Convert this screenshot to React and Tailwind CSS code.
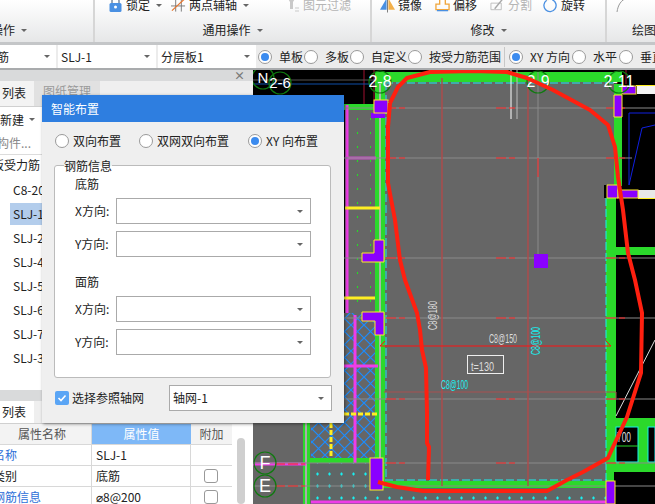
import React from "react";

const Caret = ({ className = "" }) => (
  <span
    className={`inline-block w-0 h-0 border-x-[3px] border-x-transparent border-t-[3px] border-t-[#666] ${className}`}
  />
);

const Radio = ({ checked }) => (
  <span className="shrink-0 w-[14px] h-[14px] rounded-full bg-white border border-[#9a9a9a] flex items-center justify-center">
    {checked && <span className="w-[8px] h-[8px] rounded-full bg-[#3b8bef]" />}
  </span>
);

const RadioItem = ({ label, checked, className = "" }) => (
  <div className={`flex items-center gap-[7px] shrink-0 whitespace-nowrap ${className}`}>
    <Radio checked={checked} />
    <span className="leading-[16px]">{label}</span>
  </div>
);

const RibbonItem = ({ icon, label, arrow, disabled, className = "" }) => (
  <div className={`flex items-center shrink-0 whitespace-nowrap ${disabled ? "text-[#b5b5b5]" : ""} ${className}`}>
    <span className="w-[15px] h-[16px] flex items-center justify-center">{icon}</span>
    <span className="ml-[3px] leading-[14px]">{label}</span>
    {arrow && <Caret className="ml-[6px]" />}
  </div>
);

const LockIcon = () => (
  <svg width="13" height="16" viewBox="0 0 13 16">
    <path d="M3 7V4a3.5 3.5 0 0 1 7 0v3" fill="none" stroke="#7a8aa0" strokeWidth="1.5" />
    <rect x="0.5" y="6" width="12" height="9" rx="1.5" fill="#4a90e2" />
    <circle cx="6.5" cy="10" r="1.5" fill="#fff" />
  </svg>
);

const AxisIcon = () => (
  <svg width="16" height="16" viewBox="0 0 16 16" fill="none">
    <path d="M5 0v15M11 0v15M0 9h15" stroke="#777" strokeWidth="1" />
    <path d="M1 14L14 2" stroke="#e8762c" strokeWidth="1.3" />
  </svg>
);

const FilterIcon = () => (
  <svg width="14" height="16" viewBox="0 0 14 16">
    <path d="M1 0h9L7 5v7H4V5z" fill="#c9c9c9" />
    <path d="M9 11h4M9 14h4" stroke="#c9c9c9" />
  </svg>
);

const MirrorIcon = () => (
  <svg width="16" height="16" viewBox="0 0 16 16">
    <path d="M7 1L0 13h7z" fill="#4a90e2" />
    <path d="M9 1l7 12H9z" fill="#f3b04a" />
    <path d="M8 0v16" stroke="#777" />
  </svg>
);

const OffsetIcon = () => (
  <svg width="16" height="16" viewBox="0 0 16 16" fill="none">
    <path d="M5 0v7H1v6h14V7h-4V0" stroke="#f0a53a" strokeWidth="1.4" />
    <path d="M2 14h12" stroke="#4a90e2" strokeWidth="1.4" />
  </svg>
);

const SplitIcon = () => (
  <svg width="16" height="16" viewBox="0 0 16 16" fill="none">
    <path d="M1 6h11v7H1z" stroke="#bdbdbd" />
    <path d="M5 12L14 1" stroke="#a8a8a8" strokeWidth="1.5" />
  </svg>
);

const RotateIcon = () => (
  <svg width="16" height="16" viewBox="0 0 16 16" fill="none">
    <path d="M10 2.500A6.500 6.500 0 1 1 4 3" stroke="#4a90e2" strokeWidth="1.4" />
    <path d="M3 2h3" stroke="#f0a53a" strokeWidth="1.6" />
  </svg>
);

const Ribbon = () => (
  <div className="h-[42px] flex overflow-hidden bg-gradient-to-b from-white to-[#e6e7e8] text-[#222]">
    <div className="w-[95px] shrink-0 flex flex-col border-r-2 border-r-[#d6d6d6]">
      <div className="h-[10px]" />
      <div className="mt-[14px] h-[12px] flex items-center">
        <span className="-ml-[9px] leading-[14px]">操作</span>
        <Caret className="ml-[6px]" />
      </div>
    </div>
    <div className="w-[277px] shrink-0 flex flex-col border-r-2 border-r-[#d6d6d6]">
      <div className="h-[10px] pl-[13px] flex items-center">
        <RibbonItem className="w-[63px]" icon={<LockIcon />} label="锁定" arrow />
        <RibbonItem className="w-[114px]" icon={<AxisIcon />} label="两点辅轴" arrow />
        <RibbonItem icon={<FilterIcon />} label="图元过滤" disabled />
      </div>
      <div className="mt-[14px] h-[12px] flex items-center justify-center">
        <span className="leading-[14px]">通用操作</span>
        <Caret className="ml-[6px]" />
      </div>
    </div>
    <div className="w-[235px] shrink-0 flex flex-col border-r-2 border-r-[#d6d6d6]">
      <div className="h-[10px] pl-[8px] flex items-center">
        <RibbonItem className="w-[55px]" icon={<MirrorIcon />} label="镜像" />
        <RibbonItem className="w-[55px]" icon={<OffsetIcon />} label="偏移" />
        <RibbonItem className="w-[53px]" icon={<SplitIcon />} label="分割" disabled />
        <RibbonItem icon={<RotateIcon />} label="旋转" />
      </div>
      <div className="mt-[14px] h-[12px] flex items-center justify-center">
        <span className="leading-[14px]">修改</span>
        <Caret className="ml-[6px]" />
      </div>
    </div>
    <div className="flex-1 flex flex-col">
      <div className="h-[10px] pl-[9px] flex items-center">
        <svg width="12" height="16" viewBox="0 0 12 16" fill="none">
          <path d="M1 15C2 8 5 3 11 1" stroke="#999" />
          <rect x="9" y="0" width="2" height="2" fill="#777" />
        </svg>
      </div>
      <div className="mt-[14px] h-[12px] pl-[25px] flex items-center whitespace-nowrap">
        <span className="leading-[14px]">绘图</span>
      </div>
    </div>
  </div>
);

const ToolSelect = ({ label, className = "", textClass = "" }) => (
  <div className={`h-[23px] bg-white flex items-center justify-between pr-[6px] overflow-hidden shrink-0 ${className}`}>
    <span className={`leading-[16px] whitespace-nowrap ${textClass}`}>{label}</span>
    <Caret />
  </div>
);

const Toolbar = () => (
  <div className="h-[28px] bg-[#ececec] border-t-[3px] border-t-[#c4c6c8] border-b-[2px] border-b-[#a9abad] flex items-center gap-[2px] overflow-hidden text-[#222] text-[12px]">
    <ToolSelect className="w-[56px]" textClass="-ml-[15px]" label="钢筋" />
    <ToolSelect className="w-[98px] pl-[3px]" label="SLJ-1" />
    <ToolSelect className="w-[98px] pl-[3px]" label="分层板1" />
    <div className="flex items-center gap-[1px]">
      <RadioItem checked label="单板" />
      <RadioItem label="多板" />
      <RadioItem label="自定义" />
      <RadioItem label="按受力筋范围" />
      <span className="w-[1px] h-[20px] bg-[#c8c8c8] ml-[2px] mr-[3px] shrink-0" />
      <RadioItem checked label="XY 方向" />
      <RadioItem label="水平" className="ml-[1px]" />
      <RadioItem label="垂直" className="ml-[1px]" />
    </div>
  </div>
);

const TREE = ["C8-20", "SLJ-1", "SLJ-2", "SLJ-4", "SLJ-5", "SLJ-6", "SLJ-7", "SLJ-3"];

const PROPS = [
  { name: "名称", value: "SLJ-1", link: true, tick: false },
  { name: "类别", value: "底筋", link: false, tick: true },
  { name: "钢筋信息", value: "⌀8@200", link: true, tick: true },
];

const LeftPanel = () => (
  <div className="w-[253px] shrink-0 flex flex-col bg-[#e9e9e9] overflow-hidden text-[#222] text-[12px]">
    <div className="h-[11px] bg-[#d9dadb] flex items-center justify-end pr-[8px] text-[#777]">
      <span className="text-[11px] leading-[11px] font-bold">×</span>
    </div>
    <div className="h-[26px] bg-[#efefef] border-b border-b-[#d0d0d0] flex items-stretch">
      <div className="w-[34px] bg-[#f3f3f3] flex items-start justify-end pr-[8px] pt-[3px] whitespace-nowrap">
        <span className="leading-[18px]">列表</span>
      </div>
      <div className="w-[66px] bg-[#e1e1e1] flex items-start justify-center pt-[1px] text-[#9a9a9a]">
        <span className="leading-[18px]">图纸管理</span>
      </div>
    </div>
    <div className="h-[25px] bg-white flex items-center">
      <span className="leading-[16px] whitespace-nowrap">新建</span>
      <Caret className="ml-[5px]" />
    </div>
    <div className="h-[23px] bg-white border-b border-b-[#dcdcdc] flex items-center">
      <span className="leading-[16px] -ml-[3px] whitespace-nowrap text-[#888]">构件...</span>
    </div>
    <div className="h-[235px] bg-white flex flex-col">
      <div className="h-[20px] flex items-center">
        <span className="-ml-[8px] leading-[16px] whitespace-nowrap">板受力筋</span>
      </div>
      <div className="flex flex-col mt-[3px]">
        {TREE.map((t, i) => (
          <div key={t} className="h-[24px] flex items-center">
            <span className={`ml-[10px] w-[32px] h-[22px] pl-[3px] flex items-center whitespace-nowrap ${i === 1 ? "bg-[#b3cdec]" : ""}`}>{t}</span>
          </div>
        ))}
      </div>
    </div>
    <div className="h-[11px] bg-[#d9dadb]" />
    <div className="h-[23px] bg-[#efefef] flex border-b border-b-[#d0d0d0]">
      <div className="w-[34px] bg-white flex items-center justify-end pr-[8px]">
        <span className="leading-[16px]">列表</span>
      </div>
    </div>
    <div className="flex-1 bg-white flex overflow-hidden">
      <div className="w-[232px] shrink-0 flex flex-col">
        <div className="h-[21px] shrink-0 flex text-[#555] border-b border-b-[#d8d8d8]">
          <div className="w-[92px] pl-[18px] bg-[#f3f3f3] flex items-center border-r border-r-[#d8d8d8]">属性名称</div>
          <div className="w-[99px] bg-[#7eb8f7] text-white flex items-center justify-center">属性值</div>
          <div className="w-[41px] bg-[#f3f3f3] flex items-center justify-center">附加</div>
        </div>
        {PROPS.map((p) => (
          <div key={p.name} className="h-[21px] shrink-0 flex border-b border-b-[#d8d8d8]">
            <div className={`w-[92px] flex items-center border-r border-r-[#d8d8d8] whitespace-nowrap overflow-hidden ${p.link ? "text-[#2d6fd8]" : ""}`}>
              <span className="-ml-[7px]">{p.name}</span>
            </div>
            <div className="w-[99px] pl-[4px] flex items-center border-r border-r-[#d8d8d8]">{p.value}</div>
            <div className="w-[40px] flex items-center justify-center">
              {p.tick && <span className="w-[14px] h-[14px] rounded-[3px] bg-white border border-[#999]" />}
            </div>
          </div>
        ))}
      </div>
      <div className="flex-1 pl-[5px] pt-[14px] pr-[8px]">
        <div className="h-full bg-[#cfcfcf] rounded-[4px]" />
      </div>
    </div>
  </div>
);

const DialogSelect = ({ label, className = "" }) => (
  <div className={`h-[26px] bg-white border border-[#aaa] flex items-center justify-between pl-[3px] pr-[7px] ${className}`}>
    <span className="leading-[16px]">{label}</span>
    <Caret />
  </div>
);

const DialogField = ({ label, className = "" }) => (
  <div className={`flex items-center ${className}`}>
    <span className="w-[41px] leading-[16px] whitespace-nowrap">{label}</span>
    <DialogSelect className="w-[195px]" />
  </div>
);

const SmartDialog = () => (
  <div className="absolute left-[42px] top-[95px] w-[302px] h-[328px] bg-[#efefef] shadow-[1px_1px_3px_rgba(0,0,0,0.45)] flex flex-col text-[#222] text-[12px]">
    <div className="h-[27px] shrink-0 bg-[#2e7ee0] text-white pl-[9px] flex items-center">智能布置</div>
    <div className="flex items-center h-[43px] shrink-0 pl-[13px] pb-[5px]">
      <RadioItem label="双向布置" className="w-[84px] !gap-[4px]" />
      <RadioItem label="双网双向布置" className="w-[109px] !gap-[4px]" />
      <RadioItem checked label="XY 向布置" className="!gap-[4px]" />
    </div>
    <div className="relative ml-[12px] w-[277px] h-[213px] shrink-0 bg-white border border-[#bbb] rounded-[3px] pl-[20px] pt-[10px]">
      <span className="absolute left-[9px] -top-[8px] leading-[16px] bg-[#efefef] h-[8px]">钢筋信息</span>
      <div className="leading-[16px]">底筋</div>
      <DialogField label="X方向:" className="mt-[6px]" />
      <DialogField label="Y方向:" className="mt-[7px]" />
      <div className="leading-[16px] mt-[17px]">面筋</div>
      <DialogField label="X方向:" className="mt-[6px]" />
      <DialogField label="Y方向:" className="mt-[7px]" />
    </div>
    <div className="flex items-center ml-[13px] mt-[7px]">
      <span className="w-[14px] h-[14px] rounded-[2px] bg-[#5aa5f5] flex items-center justify-center">
        <svg width="10" height="10" viewBox="0 0 10 10" fill="none">
          <path d="M1.500 5l2.500 2.500 4.500-5" stroke="#fff" strokeWidth="1.6" />
        </svg>
      </span>
      <span className="ml-[3px] w-[97px] leading-[16px]">选择参照轴网</span>
      <DialogSelect label="轴网-1" className="w-[163px]" />
    </div>
  </div>
);

const RED_CURVE =
  "M390 103 L398 87 L407 78 L430 72 L473 71 L507 72 L527 78 L553 90 L590 110 L608 125 L615 147 L618 177 L623 210 L628 253 L635 280 L642 313 L641 373 L627 417 L613 447 L608 458 L583 472 L567 480 L547 491 L423 491 L397 487 L378 482";
const RED_LEFT =
  "M390 103 L388 127 L388 183 L395 220 L400 260 L405 280 L417 313 L420 330 L422 350 L426 368 L427 413 L427 443 L429 447 L428 480";

const Axis = ({ x, y, label, r = 11, size = 15 }) => (
  <g>
    <circle cx={x} cy={y} r={r} fill="none" stroke="#0f7a0f" strokeWidth="1.2" />
    <text x={x} y={y + size / 3} fontSize={size} fill="#fff" textAnchor="middle" fontFamily="Liberation Sans, sans-serif">{label}</text>
  </g>
);

const cadFont = "Liberation Sans, sans-serif";

const CadCanvas = () => (
  <div className="flex-1 bg-black overflow-hidden">
    <svg width="402" height="434" viewBox="253 70 402 434" className="block">
      <defs>
        <pattern id="hatch" width="13" height="13" patternUnits="userSpaceOnUse">
          <rect width="13" height="13" fill="#666" />
          <path d="M0 0L13 13M13 0L0 13" stroke="#1a8cff" strokeWidth="1.2" />
        </pattern>
        <pattern id="cyandots" width="12" height="12" patternUnits="userSpaceOnUse">
          <rect width="12" height="12" fill="#5f6666" />
          <path d="M4 6h3M5.500 4.500v3" stroke="#18f0f0" strokeWidth="1.2" />
        </pattern>
        <pattern id="greendots" width="13" height="14" patternUnits="userSpaceOnUse">
          <rect width="13" height="14" fill="#666" />
          <rect x="6" y="6" width="1" height="2" fill="#22e022" />
        </pattern>
      </defs>

      {/* background lines */}
      <path d="M364 70V105M374 70V105M626 70V84" stroke="#a01030" />
      <path d="M253 80H375" stroke="#555" />
      <path d="M253 84H375" stroke="#0f4fa8" />

      {/* lower left */}
      <rect x="253" y="313" width="58" height="191" fill="#666" />
      <rect x="345" y="105" width="30" height="208" fill="url(#greendots)" />
      <rect x="344" y="104" width="31" height="6" fill="#2bd92b" />
      <rect x="311" y="313" width="64" height="145" fill="url(#hatch)" />
      <rect x="311" y="463" width="72" height="41" fill="url(#cyandots)" />
      <rect x="383" y="488" width="230" height="16" fill="url(#cyandots)" />

      {/* slab */}
      <rect x="382" y="78" width="232" height="406" fill="#666" />
      <rect x="606" y="190" width="10" height="295" fill="#2bd92b" />
      <rect x="604" y="185" width="52" height="13" fill="#000" />

      {/* right rooms */}
      <rect x="616" y="198" width="39" height="220" fill="#000" />
      <rect x="614" y="84" width="8" height="102" fill="#2bd92b" />
      <rect x="622" y="85" width="33" height="100" fill="#000" />
      <path d="M629 113H655M629 113V185M629 185L642 128L655 125" fill="none" stroke="#1020e0" />
      <rect x="637" y="86" width="18" height="8" fill="#f4f4f4" />
      <path d="M636 85.500H655" stroke="#ffee22" />
      <rect x="638" y="190" width="17" height="8" fill="#e8e8e8" />
      <path d="M638 198.500H655" stroke="#ffee22" />
      <rect x="616" y="247" width="39" height="8" fill="#2bd92b" />
      <path d="M616 416L655 340" stroke="#ddd" />
      <rect x="616" y="418" width="39" height="86" fill="#2bd92b" />
      <rect x="616" y="427" width="22" height="35" fill="#000" stroke="#18f0f0" />
      <rect x="648" y="427" width="7" height="35" fill="#000" stroke="#18f0f0" />
      <rect x="614" y="472" width="41" height="32" fill="#000" />
      <path d="M616 446H638" stroke="#2bd92b" />
      <path d="M590 463H655" stroke="#8a8a8a" />
      <text x="617" y="442" fontSize="14" fill="#ddd" fontFamily={cadFont} textLength="14" lengthAdjust="spacingAndGlyphs">700</text>

      {/* walls */}
      <rect x="375" y="72" width="247" height="10" fill="#2bd92b" />
      <path d="M385 83H614" stroke="#18f0f0" strokeDasharray="8 3" />
      <rect x="375" y="72" width="10" height="410" fill="#2bd92b" />
      <path d="M380 84V480" stroke="#a8b8a8" strokeWidth="2" />
      <rect x="303" y="423" width="7" height="81" fill="#2bd92b" />
      <path d="M306 423V504" stroke="#aaa" strokeWidth="2" />
      <rect x="310" y="458" width="73" height="5" fill="#2bd92b" />
      <rect x="375" y="481" width="240" height="7" fill="#2bd92b" />
      <path d="M385 480H607" stroke="#18f0f0" strokeDasharray="8 3" />
      <path d="M386 84V480" stroke="#18f0f0" strokeDasharray="8 3" />
      <path d="M606 198V480" stroke="#18f0f0" strokeDasharray="8 3" />
      <path d="M311 502H610" stroke="#ef3de8" strokeWidth="3" />
      <path d="M347 105V313" stroke="#ef3de8" strokeWidth="3" />
      <path d="M345 158H376" stroke="#c850c8" strokeWidth="3" />
      <path d="M345 208H380" stroke="#ffee22" strokeWidth="3" />
      <path d="M344 298H375" stroke="#ffee22" strokeWidth="3" />
      <path d="M355 315V463" stroke="#ef3de8" strokeWidth="3" />
      <path d="M315 366H378" stroke="#ef3de8" strokeWidth="3" />
      <path d="M331 423V458" stroke="#ffee22" strokeWidth="3" strokeDasharray="5 2" />
      <path d="M344 414H378" stroke="#ffee22" strokeWidth="3" strokeDasharray="5 2" />
      <path d="M253 464H306" stroke="#ef3de8" strokeWidth="3" />

      {/* grid */}
      <path d="M344 108H655M344 158H632M344 258H655M344 318H655M344 399H655M253 463H590M253 486H655" stroke="#8a8a8a" />
      <path d="M442 78V486M528 78V486" stroke="#b04a4a" strokeWidth="1.4" />
      <path d="M538 72V268" stroke="#8a8a8a" />
      <path d="M511 70V119" stroke="#fff" />
      <path d="M517 70V119" stroke="#bbb" />
      <path d="M384 392H616V398" fill="none" stroke="#a85050" />
      <path d="M386 108H405M496 108H515M606 108H625M386 158H405M496 158H515M606 158H625M386 258H405M496 258H515M606 258H625M386 318H405M496 318H515M606 318H625M386 399H405M496 399H515M606 399H625M386 463H405M496 463H515M606 463H625M275 464H305M275 486H305" stroke="#ff2020" strokeDasharray="10 3" />
      <path d="M538 158V177" stroke="#ff2020" />
      <path d="M380 346H611M380 346L385 341M611 346L606 341" fill="none" stroke="#ff1010" />

      {/* columns */}
      <rect x="371" y="113" width="14" height="5" fill="#8a00ff" />
      <g stroke="#ffee22" strokeWidth="1">
        <rect x="374" y="100" width="14" height="13" fill="#8a00ff" />
        <path d="M614 95V117H622V95Z" fill="#8a00ff" />
        <rect x="622" y="86" width="14" height="8" fill="#8a00ff" />
        <path d="M607 185H618V198H607Z" fill="#8a00ff" />
        <rect x="618" y="190" width="20" height="8" fill="#8a00ff" />
        <path d="M374 240H384V262H362V253H374Z" fill="#8a00ff" />
        <path d="M362 312H384V335H375V321H362Z" fill="#8a00ff" />
        <rect x="370" y="458" width="13" height="32" fill="#8a00ff" />
        <rect x="606" y="481" width="9" height="23" fill="#8a00ff" />
      </g>
      <rect x="534" y="254" width="14" height="14" fill="#8a00ff" />

      {/* annotations */}
      <text transform="translate(437 330) rotate(-90)" fontSize="13" fill="#ddd" fontFamily={cadFont} textLength="29" lengthAdjust="spacingAndGlyphs">C8@180</text>
      <text transform="translate(540 355) rotate(-90)" fontSize="13" fill="#18f0f0" fontFamily={cadFont} textLength="28" lengthAdjust="spacingAndGlyphs">C8@100</text>
      <text x="489" y="343" fontSize="13" fill="#ddd" fontFamily={cadFont} textLength="28" lengthAdjust="spacingAndGlyphs">C8@150</text>
      <text x="441" y="389" fontSize="13" fill="#18f0f0" fontFamily={cadFont} textLength="27" lengthAdjust="spacingAndGlyphs">C8@100</text>
      <rect x="467.500" y="355.500" width="36" height="18" fill="none" stroke="#eee" />
      <text x="471" y="371" fontSize="13" fill="#ddd" fontFamily={cadFont} textLength="23" lengthAdjust="spacingAndGlyphs">t=130</text>

      {/* axis bubbles */}
      <Axis x={263} y={78} label="N" />
      <Axis x={280} y={83} label="2-6" />
      <Axis x={380} y={82} label="2-8" size={16} />
      <Axis x={538} y={82} label="2-9" size={16} />
      <Axis x={619} y={82} label="2-11" size={16} />
      <Axis x={265} y={463} label="F" size={18} />
      <Axis x={265} y={486} label="E" size={18} />

      {/* hand marked outline */}
      <path d={RED_CURVE} fill="none" stroke="#ff2010" strokeWidth="4" strokeLinejoin="round" />
      <path d={RED_LEFT} fill="none" stroke="#ff2010" strokeWidth="4" strokeLinejoin="round" />
    </svg>
  </div>
);

export default function App() {
  return (
    <div className="relative h-screen overflow-hidden flex flex-col text-[12px] font-['Noto_Sans_CJK_SC','Liberation_Sans',sans-serif]">
      <Ribbon />
      <Toolbar />
      <div className="flex-1 flex min-h-0">
        <LeftPanel />
        <CadCanvas />
      </div>
      <SmartDialog />
    </div>
  );
}
